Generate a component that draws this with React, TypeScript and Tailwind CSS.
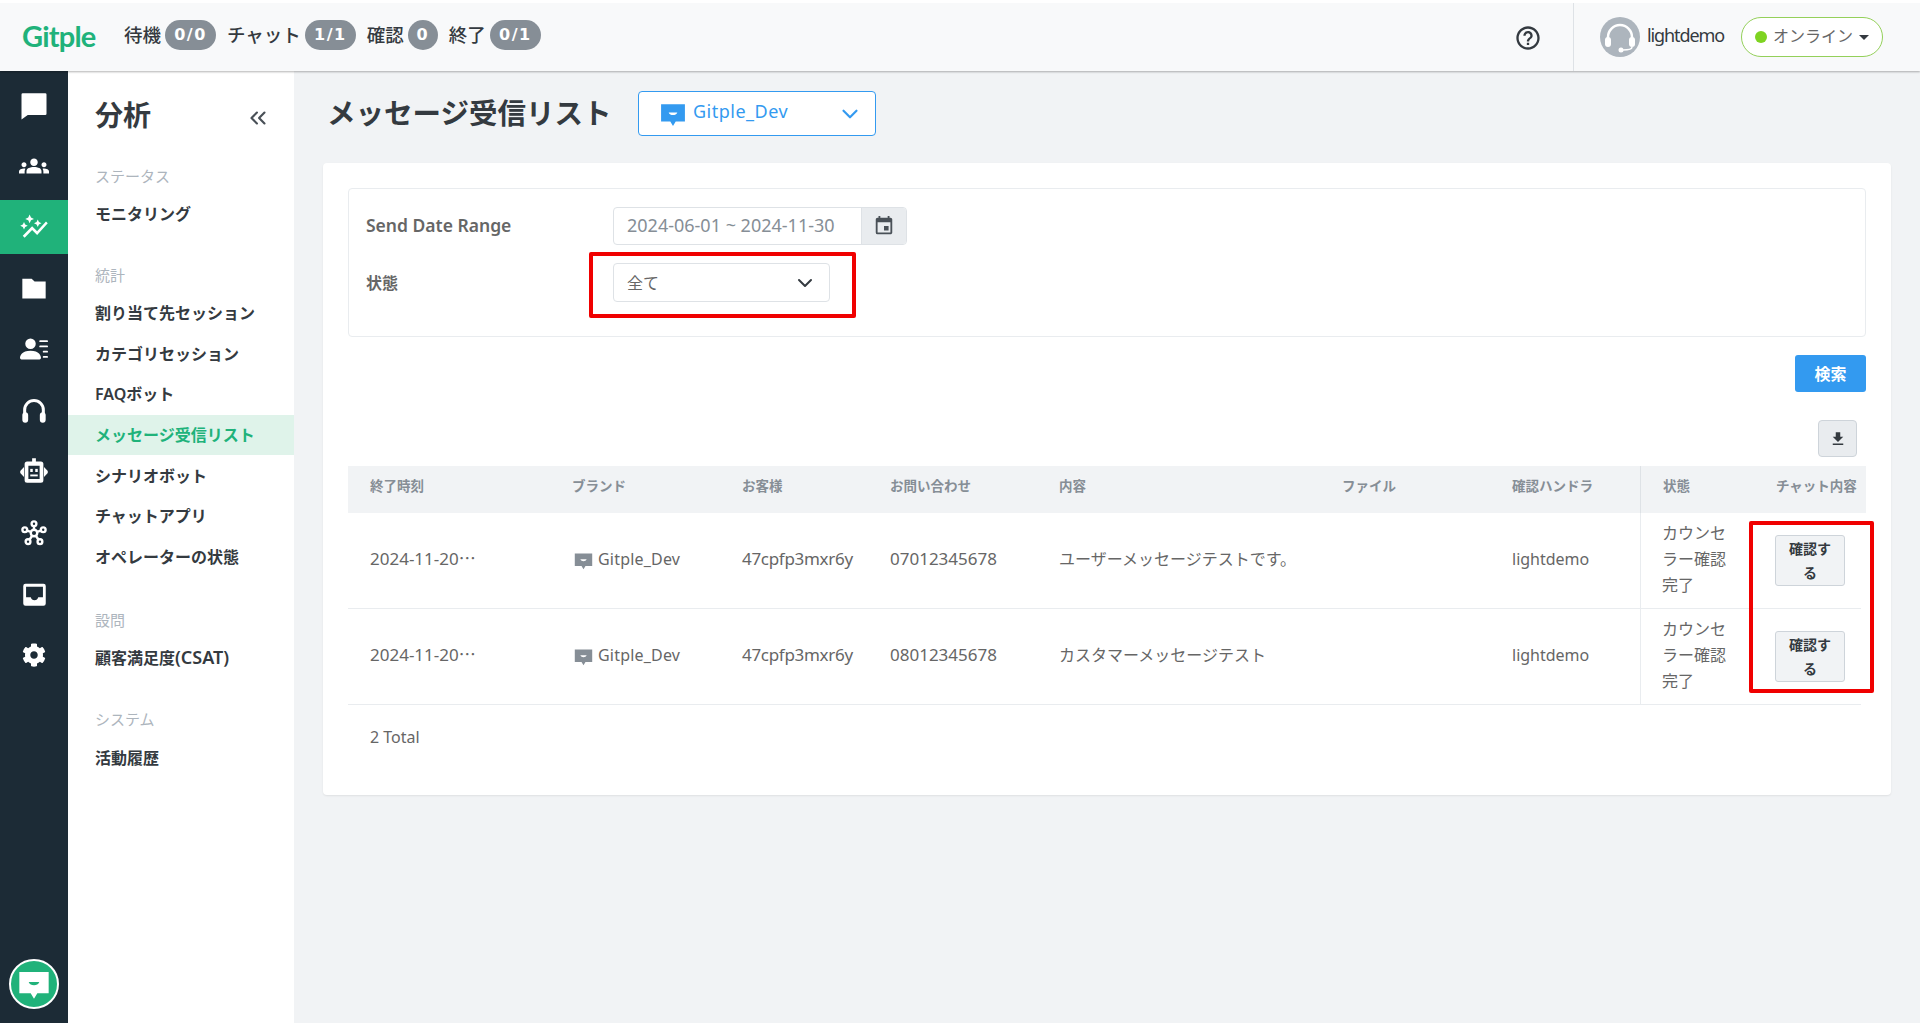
import React from "react";
import { ChevronDown, ChevronsLeft } from "lucide-react";
import { MdGroups, MdAutoGraph, MdEvent, MdFileDownload, MdHelpOutline } from "react-icons/md";
import { BsPersonLinesFill } from "react-icons/bs";
import { FaCog } from "react-icons/fa";

function Bubble({ className, mark }: { className: string; mark: string }) {
  return (
    <svg viewBox="0 0 24 24" className={className} fill="currentColor">
      <path d="M1 3h22v16H14.500L12 23l-2.500-4H1z" />
      <path d="M8 10.500h8c-.6 1.600-2.200 2.500-4 2.500s-3.400-.9-4-2.500z" fill={mark} />
    </svg>
  );
}

function ChatSquare({ className }: { className: string }) {
  return (
    <svg viewBox="0 0 24 24" className={className} fill="currentColor">
      <path d="M3 2.500h18a1 1 0 0 1 1 1V19a1 1 0 0 1-1 1H7l-5 3.500V3.500a1 1 0 0 1 1-1z" />
    </svg>
  );
}

function Folder({ className }: { className: string }) {
  return (
    <svg viewBox="0 0 24 24" className={className} fill="currentColor">
      <path d="M2 4h8l2.500 2.500H22V21H2z" />
    </svg>
  );
}

function Headset({ className }: { className: string }) {
  return (
    <svg viewBox="0 0 24 24" className={className} fill="none" stroke="currentColor" strokeWidth="2.600" strokeLinecap="round">
      <path d="M4 18V11a8 8 0 0 1 16 0v7" />
      <path d="M4.500 15.500v4M19.500 15.500v4" strokeWidth="5" />
    </svg>
  );
}

function Robot({ className }: { className: string }) {
  return (
    <svg viewBox="0 0 24 24" className={className} fill="currentColor">
      <rect x="10.500" y="1" width="3" height="3" />
      <path fillRule="evenodd" d="M6.500 3.500h11a2 2 0 0 1 2 2v13a2 2 0 0 1-2 2h-11a2 2 0 0 1-2-2v-13a2 2 0 0 1 2-2zM7.500 7v10.500h9V7z" />
      <path d="M4 8v8l-3-3.200v-1.600zM20 8v8l3-3.200v-1.600z" />
      <rect x="9" y="9.500" width="2" height="2.500" />
      <rect x="13" y="9.500" width="2" height="2.500" />
      <rect x="9" y="14" width="6" height="1.500" />
    </svg>
  );
}

function Hub({ className }: { className: string }) {
  return (
    <svg viewBox="0 0 24 24" className={className} fill="none" stroke="currentColor" strokeWidth="2.200">
      <circle cx="12" cy="12" r="3" />
      <circle cx="12" cy="3.500" r="2.200" />
      <circle cx="3.500" cy="9" r="2.200" />
      <circle cx="20.500" cy="9" r="2.200" />
      <circle cx="6.500" cy="20" r="2.200" />
      <circle cx="17.500" cy="20" r="2.200" />
      <path d="M12 5.700V9M5.600 9.800l3.600 1.200M18.400 9.800L14.800 11M7.800 18.200l2.500-3.700M16.200 18.200l-2.500-3.700" />
    </svg>
  );
}

function Inbox({ className }: { className: string }) {
  return (
    <svg viewBox="0 0 24 24" className={className} fill="currentColor">
      <path fillRule="evenodd" d="M4 2.500h16a2 2 0 0 1 2 2V20a2 2 0 0 1-2 2H4a2 2 0 0 1-2-2V4.500a2 2 0 0 1 2-2zM4.500 5v9.500h4.200a3.400 3.400 0 0 0 6.600 0h4.200V5z" />
    </svg>
  );
}

function AgentAvatar() {
  return (
    <div className="flex h-10 w-10 items-center justify-center rounded-full bg-[#adb5bd]">
      <svg viewBox="0 0 40 40" className="h-10 w-10" fill="none">
        <path d="M8 24v-4a12 12 0 0 1 24 0v4" stroke="#fff" strokeWidth="2.500" />
        <rect x="5" y="20" width="6" height="10" rx="3" fill="#fff" />
        <rect x="29" y="20" width="6" height="10" rx="3" fill="#fff" />
        <path d="M32 30c0 2-3 3-9 3" stroke="#fff" strokeWidth="1.500" />
        <circle cx="21" cy="33" r="2.500" fill="#fff" />
      </svg>
    </div>
  );
}

const railIcons = [
  <ChatSquare className="h-[30px] w-[30px]" />,
  <MdGroups className="h-[30px] w-[30px]" />,
  <MdAutoGraph className="h-[30px] w-[30px]" />,
  <Folder className="h-[28px] w-[28px]" />,
  <BsPersonLinesFill className="h-[28px] w-[28px]" />,
  <Headset className="h-[28px] w-[28px]" />,
  <Robot className="h-[30px] w-[30px]" />,
  <Hub className="h-[26px] w-[26px]" />,
  <Inbox className="h-[27px] w-[27px]" />,
  <FaCog className="h-[24px] w-[24px]" />,
];

const navGroups = [
  { label: "ステータス", margin: "mt-0", items: ["モニタリング"] },
  { label: "統計", margin: "mt-[23px]", items: ["割り当て先セッション", "カテゴリセッション", "FAQボット", "メッセージ受信リスト", "シナリオボット", "チャットアプリ", "オペレーターの状態"] },
  { label: "設問", margin: "mt-[25px]", items: ["顧客満足度(CSAT)"] },
  { label: "システム", margin: "mt-[24px]", items: ["活動履歴"] },
];

const stats = [
  { label: "待機", value: "0/0", width: "w-[51px]" },
  { label: "チャット", value: "1/1", width: "w-[51px]" },
  { label: "確認", value: "0", width: "w-[30px]" },
  { label: "終了", value: "0/1", width: "w-[51px]" },
];

const headers = ["終了時刻", "ブランド", "お客様", "お問い合わせ", "内容", "ファイル", "確認ハンドラ", "状態"];

const rows = [
  { phone: "07012345678", message: "ユーザーメッセージテストです。" },
  { phone: "08012345678", message: "カスタマーメッセージテスト" },
];

const gridCols = "grid grid-cols-[202px_170px_148px_169px_283px_170px_150px_105px_121px]";

export default function App() {
  return (
    <div className="relative flex h-[1024px] w-[1920px] flex-col overflow-hidden bg-white font-['Noto_Sans','Noto_Sans_CJK_JP',sans-serif] text-[#343a40]">
      <header className="relative z-10 flex h-[71px] shrink-0 items-center border-t-[3px] border-white bg-[#f8f9fa] shadow-[0_1px_2px_rgba(0,0,0,0.3)]">
        <div className="ml-[22px] w-[102px] -translate-y-[2px] font-['Lato',sans-serif] text-[29px] font-bold leading-none tracking-[-0.8px] text-[#20b27a]">Gitple</div>
        <div className="flex -translate-y-[2px] items-center">
          {stats.map((s) => (
            <div key={s.label} className="mr-[11px] flex items-center gap-[4px]">
              <span className="whitespace-nowrap text-[18.500px] font-medium leading-none text-[#343a40]">{s.label}</span>
              <span className={`flex h-[30px] ${s.width} items-center justify-center rounded-[15px] bg-[#868e96] font-['DejaVu_Sans',sans-serif] text-[16px] font-bold tracking-[1.500px] text-white`}>{s.value}</span>
            </div>
          ))}
        </div>
        <div className="ml-auto flex h-full items-center">
          <MdHelpOutline className="mr-[31px] mt-[2px] h-[28px] w-[28px] text-[#343a40]" />
          <div className="flex h-full items-center gap-[7px] border-l border-[#dee2e6] pl-[26px] pr-[37px]">
            <AgentAvatar />
            <span className="mr-[10px] -translate-y-[2px] text-[18px] tracking-[-1.100px] text-[#343a40]">lightdemo</span>
            <div className="flex h-[40px] w-[142px] items-center rounded-[20px] border border-[#94d05a] bg-white pl-[13px]">
              <span className="h-3 w-3 rounded-full bg-[#7ed321]" />
              <span className="ml-[6px] -translate-y-[1px] text-[16px] text-[#666666]">オンライン</span>
              <span className="ml-[6px] h-0 w-0 border-x-[5px] border-t-[5px] border-x-transparent border-t-[#343a40]" />
            </div>
          </div>
        </div>
      </header>

      <div className="flex min-h-0 flex-1 border-b border-white bg-[#f1f3f5]">
        <nav className="flex w-[68px] shrink-0 flex-col items-center bg-[#1c2b36] pt-[3px] text-white">
          {railIcons.map((icon, i) =>
            i === 2 ? (
              <div key={i} className="my-[3.600px] flex h-[54px] w-full items-center justify-center bg-[#20b27a]">
                {icon}
              </div>
            ) : (
              <div key={i} className="flex h-[61.200px] w-full items-center justify-center">
                {icon}
              </div>
            )
          )}
          <div className="mb-[14px] mt-auto flex h-[50px] w-[50px] items-center justify-center rounded-full border-2 border-white bg-[#20b27a]">
            <Bubble className="h-[32px] w-[32px] text-white" mark="#20b27a" />
          </div>
        </nav>

        <aside className="w-[226px] shrink-0 bg-white">
          <div className="flex h-[88px] items-center justify-between pl-[27px] pr-[23px]">
            <span className="text-[28px] font-bold leading-none text-[#343a40]">分析</span>
            <ChevronsLeft className="mt-[5px] h-[26px] w-[26px] text-[#495057]" strokeWidth={2} />
          </div>
          <div className="flex flex-col">
            {navGroups.map((g) => (
              <div key={g.label} className={g.margin}>
                <div className="flex h-[35px] items-center pl-[27px] text-[15px] text-[#adb5bd]">{g.label}</div>
                {g.items.map((item) => {
                  const active = item === "メッセージ受信リスト";
                  return (
                    <div key={item} className={`flex h-[40.700px] items-center pl-[27px] text-[16px] font-semibold ${active ? "bg-[#dff3ea] text-[#20b27a]" : "text-[#343a40]"}`}>
                      {item.endsWith("(CSAT)") ? (
                        <span>
                          顧客満足度<span className="text-[18px]">(CSAT)</span>
                        </span>
                      ) : (
                        item
                      )}
                    </div>
                  );
                })}
              </div>
            ))}
          </div>
        </aside>

        <main className="flex-1 px-[29px] pt-[20px]">
          <div className="flex h-[45px] items-center">
            <h1 className="ml-[4px] w-[311px] text-[28.500px] font-bold leading-none text-[#343a40]">メッセージ受信リスト</h1>
            <div className="flex h-[45px] w-[238px] items-center rounded-[4px] border border-[#339af0] bg-white pl-[21px] pr-[12px] text-[#339af0]">
              <Bubble className="h-[26px] w-[26px]" mark="#ffffff" />
              <span className="ml-[7px] -translate-y-[2px] text-[18px] tracking-[0.5px]">Gitple_Dev</span>
              <ChevronDown className="ml-auto h-[26px] w-[26px]" strokeWidth={2} />
            </div>
          </div>

          <section className="mt-[27px] rounded-[4px] bg-white px-[25px] pb-[46px] pt-[25px] shadow-[0_1px_2px_rgba(0,0,0,0.08)]">
            <div className="h-[149px] rounded-[4px] border border-[#e9ecef] pl-[17px] pt-[18px]">
              <div className="flex h-[38px] items-center">
                <div className="w-[247px] -translate-y-[1px] text-[17.500px] font-semibold text-[#666666]">Send Date Range</div>
                <div className="flex h-[38px] w-[294px] rounded-[4px] border border-[#dee2e6]">
                  <div className="flex w-[247px] items-center pb-[2px] pl-[13px] text-[18px] text-[#868e96]">2024-06-01 ~ 2024-11-30</div>
                  <div className="flex flex-1 items-center justify-center rounded-r-[3px] border-l border-[#dee2e6] bg-[#e9ecef]">
                    <MdEvent className="h-[22px] w-[22px] text-[#495057]" />
                  </div>
                </div>
              </div>
              <div className="mt-[18px] flex h-[39px] items-center">
                <div className="w-[247px] text-[16px] font-semibold text-[#666666]">状態</div>
                <div className="flex h-[39px] w-[217px] items-center justify-between rounded-[4px] border border-[#dee2e6] bg-white pl-[13px] pr-[12px] text-[16px] text-[#666666]">
                  <span>全て</span>
                  <ChevronDown className="h-[24px] w-[24px] text-[#343a40]" strokeWidth={2} />
                </div>
              </div>
            </div>

            <div className="mt-[18px] flex justify-end">
              <div className="flex h-[37px] w-[71px] items-center justify-center rounded-[3px] bg-[#339af0] text-[16px] font-bold text-white">検索</div>
            </div>
            <div className="mt-[28px] flex justify-end pr-[9px]">
              <div className="flex h-[37px] w-[39px] items-center justify-center rounded-[4px] border border-[#ced4da] bg-[#e9ecef]">
                <MdFileDownload className="h-[18px] w-[18px] text-[#343a40]" />
              </div>
            </div>

            <div className={`${gridCols} mt-[9px] h-[47px] items-center bg-[#f1f3f5] text-[13.500px] font-semibold text-[#868e96]`}>
              {headers.map((h, i) => (
                <div key={h} className={i === 7 ? "flex h-full items-center border-l border-[#dee2e6] pb-[7px] pl-[22px]" : "pb-[7px] pl-[22px]"}>{h}</div>
              ))}
              <div className="whitespace-nowrap pb-[7px] pl-[31px]">チャット内容</div>
            </div>

            {rows.map((r) => (
              <div key={r.phone} className={`${gridCols} h-[96px] w-[1513px] items-center border-b border-[#e9ecef] text-[16px] text-[#666666]`}>
                <div className="pb-[4px] pl-[22px] text-[17px]">2024-11-20⋯</div>
                <div className="flex items-center gap-[5px] pb-[4px] pl-[24px] tracking-[0.2px]">
                  <Bubble className="mt-[4px] h-[19px] w-[19px] text-[#868e96]" mark="#ffffff" />
                  <span>Gitple_Dev</span>
                </div>
                <div className="pb-[4px] pl-[22px] text-[17px] tracking-[-0.3px]">47cpfp3mxr6y</div>
                <div className="pb-[4px] pl-[22px] text-[17px]">{r.phone}</div>
                <div className="pb-[4px] pl-[22px]">{r.message}</div>
                <div />
                <div className="pb-[4px] pl-[22px]">lightdemo</div>
                <div className="flex h-full items-center border-l border-[#e9ecef] pb-[4px] pl-[21px] pr-[19px] leading-[26px]">カウンセラー確認完了</div>
                <div className="pl-[30px]">
                  <div className="flex h-[51px] w-[70px] items-center justify-center rounded-[3px] border border-[#ced4da] bg-[#f1f3f5] px-[12px] text-center text-[14px] font-semibold leading-[24px] text-[#343a40]">確認する</div>
                </div>
              </div>
            ))}

            <div className="mt-[20px] pl-[22px] text-[16px] leading-[24px] text-[#666666]">2 Total</div>
          </section>
        </main>
      </div>

      <div className="pointer-events-none absolute left-[589px] top-[252px] h-[66px] w-[267px] rounded-[2px] border-[4px] border-[#f00000]" />
      <div className="pointer-events-none absolute left-[1749px] top-[521px] h-[172px] w-[125px] rounded-[2px] border-[4px] border-[#f00000]" />
    </div>
  );
}
